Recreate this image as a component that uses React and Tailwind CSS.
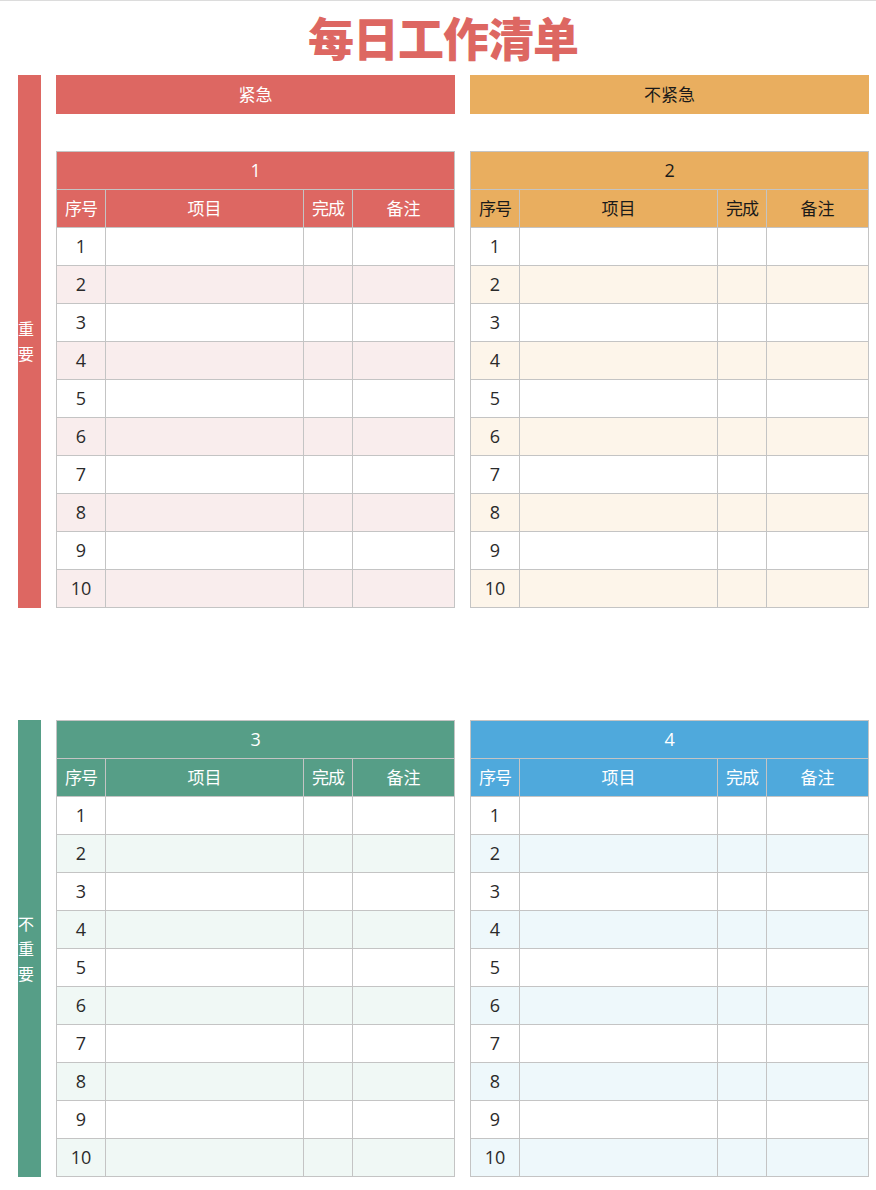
import React from 'react';

const themes = {
  red: { head: 'bg-[#dd6762]', headText: 'text-white', stripe: 'bg-[#f9eded]' },
  orange: { head: 'bg-[#e9ae5f]', headText: 'text-[#1a1a1a]', stripe: 'bg-[#fdf5ea]' },
  green: { head: 'bg-[#569e87]', headText: 'text-white', stripe: 'bg-[#f0f8f5]' },
  blue: { head: 'bg-[#4fa9dc]', headText: 'text-white', stripe: 'bg-[#eef8fb]' },
};

const rows = [1, 2, 3, 4, 5, 6, 7, 8, 9, 10];

const QuadrantTable = ({ no, theme }) => {
  const t = themes[theme];
  return (
    <table className="w-[398px] table-fixed border-collapse text-[17px]">
      <colgroup>
        <col className="w-[49px]" />
        <col className="w-[198px]" />
        <col className="w-[49px]" />
        <col className="w-[102px]" />
      </colgroup>
      <thead>
        <tr className={`h-[38px] ${t.head} ${t.headText}`}>
          <th colSpan={4} className="border border-[#c4c4c4] text-[18px] font-normal">
            {no}
          </th>
        </tr>
        <tr className={`h-[38px] ${t.head} ${t.headText}`}>
          <th className="border border-[#c4c4c4] px-0 font-normal tracking-[-1px]">序号</th>
          <th className="border border-[#c4c4c4] font-normal">项目</th>
          <th className="border border-[#c4c4c4] px-0 font-normal tracking-[-1px]">完成</th>
          <th className="border border-[#c4c4c4] font-normal">备注</th>
        </tr>
      </thead>
      <tbody>
        {rows.map((n) => (
          <tr key={n} className={`h-[38px] ${n % 2 === 0 ? t.stripe : 'bg-white'}`}>
            <td className="border border-[#c4c4c4] text-center text-[18px] text-[#2a2a2a]">{n}</td>
            <td className="border border-[#c4c4c4]"></td>
            <td className="border border-[#c4c4c4]"></td>
            <td className="border border-[#c4c4c4]"></td>
          </tr>
        ))}
      </tbody>
    </table>
  );
};

const SideLabel = ({ chars, color }) => (
  <div className={`flex w-[23px] shrink-0 flex-col items-start justify-center gap-[3px] ${color} text-[16px] leading-[22px] text-white`}>
    {chars.map((c, i) => (
      <span key={i}>{c}</span>
    ))}
  </div>
);

export default function App() {
  return (
    <div
      className="min-h-[1190px] w-[876px] border-t border-[#dcdcdc] bg-white"
      style={{ fontFamily: '"Open Sans", "Noto Sans CJK SC", sans-serif' }}
    >
      <h1 className="flex h-[74px] items-center justify-center pl-[10px] text-[46px] font-black tracking-[-1px] text-[#dd6762]">
        每日工作清单
      </h1>

      <div className="flex gap-[15px] pl-[18px]">
        <SideLabel chars={['重', '要']} color="bg-[#dd6762]" />
        <div className="flex flex-col">
          <div className="grid grid-cols-[399px_399px] gap-[15px]">
            <div className="flex h-[39px] items-center justify-center bg-[#dd6762] text-[17px] text-white">紧急</div>
            <div className="flex h-[39px] items-center justify-center bg-[#e9ae5f] text-[17px] text-[#1a1a1a]">不紧急</div>
          </div>
          <div className="mt-[37px] grid grid-cols-[399px_399px] gap-[15px]">
            <QuadrantTable no={1} theme="red" />
            <QuadrantTable no={2} theme="orange" />
          </div>
        </div>
      </div>

      <div className="mt-[112px] flex gap-[15px] pl-[18px]">
        <SideLabel chars={['不', '重', '要']} color="bg-[#569e87]" />
        <div className="grid grid-cols-[399px_399px] gap-[15px]">
          <QuadrantTable no={3} theme="green" />
          <QuadrantTable no={4} theme="blue" />
        </div>
      </div>
    </div>
  );
}
